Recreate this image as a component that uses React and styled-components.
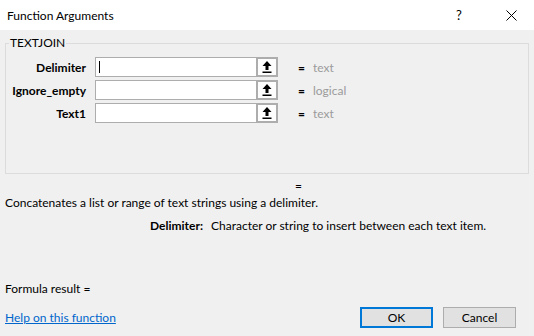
import React from 'react'
import styled, { createGlobalStyle } from 'styled-components'

const GlobalStyle = createGlobalStyle`
  html, body {
    margin: 0;
    padding: 0;
    background: #f0f0f0;
  }
  body {
    font-family: Lato, "Liberation Sans", Arial, sans-serif;
    font-size: 12px;
    color: #000;
  }
`

const args = [
  { name: 'Delimiter', value: 'text', focused: true },
  { name: 'Ignore_empty', value: 'logical' },
  { name: 'Text1', value: 'text' },
]

const PickIcon = () => (
  <svg width="10" height="12" viewBox="0 0 10 12">
    <path d="M5 0 L9.5 5 L6.5 5 L6.5 9 L3.5 9 L3.5 5 L0.5 5 Z" fill="#000" />
    <rect x="0.5" y="10.5" width="9" height="1.5" fill="#000" />
  </svg>
)

const CloseIcon = () => (
  <svg width="11" height="11" viewBox="0 0 11 11">
    <path d="M0.5 0.5 L10.5 10.5 M10.5 0.5 L0.5 10.5" stroke="#000" strokeWidth="1" fill="none" />
  </svg>
)

export default function App() {
  return (
    <>
      <GlobalStyle />
      <Dialog>
        <TitleBar>
          <Title>Function Arguments</Title>
          <TitleButton gap={6}>?</TitleButton>
          <TitleButton><CloseIcon /></TitleButton>
        </TitleBar>

        <Body>
          <GroupBox>
            <Legend>TEXTJOIN</Legend>
            <ArgGrid>
              {args.map(arg => (
                <React.Fragment key={arg.name}>
                  <ArgLabel>{arg.name}</ArgLabel>
                  <ArgInput>
                    {arg.focused && <Caret />}
                  </ArgInput>
                  <PickButton><PickIcon /></PickButton>
                  <Equals>=</Equals>
                  <ArgValue>{arg.value}</ArgValue>
                </React.Fragment>
              ))}
            </ArgGrid>
          </GroupBox>

          <ResultEquals>=</ResultEquals>
          <Description>Concatenates a list or range of text strings using a delimiter.</Description>
          <ArgHelp>
            <b>Delimiter:</b>
            <span>Character or string to insert between each text item.</span>
          </ArgHelp>

          <Spacer />

          <FormulaResult>Formula result =</FormulaResult>
          <Footer>
            <HelpLink href="#">Help on this function</HelpLink>
            <DialogButton primary>OK</DialogButton>
            <DialogButton>Cancel</DialogButton>
          </Footer>
        </Body>
      </Dialog>
    </>
  )
}

const Dialog = styled.div`
  width: 534px;
  height: 336px;
  display: flex;
  flex-direction: column;
  background: #f0f0f0;
  overflow: hidden;
`

const TitleBar = styled.div`
  height: 30px;
  flex: none;
  background: #fff;
  display: flex;
  align-items: center;
  padding-left: 7px;
`

const Title = styled.div`
  flex: 1;
  font-size: 12px;
`

const TitleButton = styled.div`
  width: 46px;
  height: 30px;
  margin-right: ${({ gap }) => gap || 0}px;
  display: flex;
  align-items: center;
  justify-content: center;
  font-size: 13px;
`

const Body = styled.div`
  flex: 1;
  display: flex;
  flex-direction: column;
  padding: 0 18px 8px 5px;
`

const GroupBox = styled.fieldset`
  margin: 6px -13px 0 0;
  padding: 7px 0 0 0;
  border: 1px solid #dcdcdc;
  height: 138px;
  box-sizing: border-box;
  min-width: 0;
`

const Legend = styled.legend`
  margin-left: 3px;
  padding: 0 1px;
  line-height: 14px;
  font-size: 12px;
`

const ArgGrid = styled.div`
  display: grid;
  grid-template-columns: 80px 170px 22px 35px auto;
  grid-auto-rows: 20px;
  row-gap: 3px;
  align-items: center;
`

const ArgLabel = styled.div`
  font-weight: bold;
  text-align: right;
`

const ArgInput = styled.div`
  margin-left: 9px;
  height: 20px;
  box-sizing: border-box;
  background: #fff;
  border: 1px solid #adadad;
  border-right: none;
  display: flex;
  align-items: center;
  padding-left: 3px;
`

const Caret = styled.div`
  width: 1px;
  height: 12px;
  background: #000;
`

const PickButton = styled.div`
  height: 20px;
  box-sizing: border-box;
  border: 2px solid #adadad;
  background: #fdfdfd;
  display: flex;
  align-items: center;
  justify-content: center;
`

const Equals = styled.div`
  font-weight: bold;
  padding-left: 20px;
`

const ArgValue = styled.div`
  color: #9b9b9b;
`

const ResultEquals = styled.div`
  margin-top: 5px;
  padding-left: 290px;
  line-height: 14px;
`

const Description = styled.div`
  margin-top: 3px;
  line-height: 14px;
`

const ArgHelp = styled.div`
  margin-top: 9px;
  padding-left: 145px;
  display: flex;
  gap: 8px;
  line-height: 14px;
`

const Spacer = styled.div`
  flex: 1;
`

const FormulaResult = styled.div`
  line-height: 14px;
`

const Footer = styled.div`
  margin-top: 11px;
  display: flex;
  align-items: center;
  gap: 10px;
`

const HelpLink = styled.a`
  flex: 1;
  color: #0066cc;
  text-decoration: underline;
`

const DialogButton = styled.button`
  width: 73px;
  height: 21px;
  box-sizing: border-box;
  font-family: inherit;
  font-size: 12px;
  color: #000;
  background: #e1e1e1;
  border: ${({ primary }) => primary ? '2px solid #0078d7' : '1px solid #adadad'};
  padding: 0;
`
